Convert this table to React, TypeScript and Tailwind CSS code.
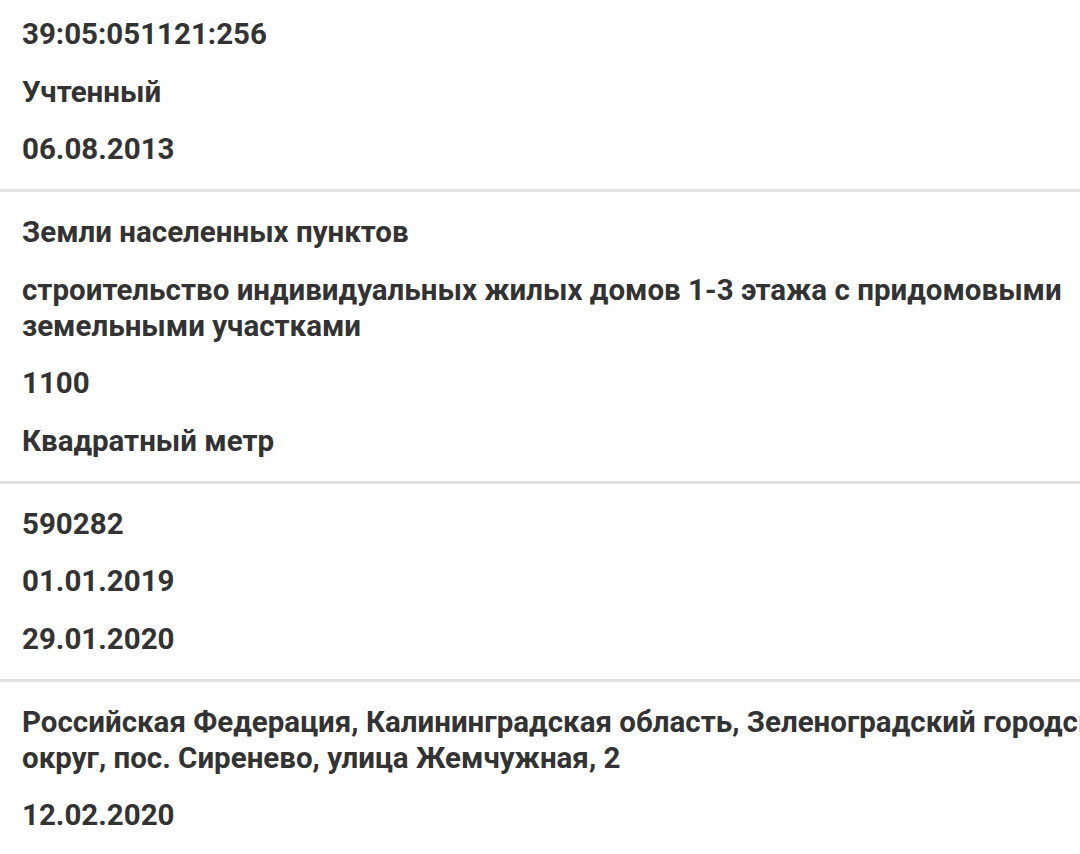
const sections: string[][] = [
  ["39:05:051121:256", "Учтенный", "06.08.2013"],
  [
    "Земли населенных пунктов",
    "строительство индивидуальных жилых домов 1-3 этажа с придомовыми земельными участками",
    "1100",
    "Квадратный метр",
  ],
  ["590282", "01.01.2019", "29.01.2020"],
  [
    "Российская Федерация, Калининградская область, Зеленоградский городской округ, пос. Сиренево, улица Жемчужная, 2",
    "12.02.2020",
  ],
];

export default function App() {
  return (
    <div className="w-full h-[854px] overflow-hidden bg-white">
      <div className="w-[1200px] font-['Roboto',sans-serif] font-bold text-[29.5px] leading-[36px] text-[#333333]">
        {sections.map((items, i) => (
          <div key={i}>
            {i > 0 && <div className="h-[3px] bg-[#e2e2e2]" />}
            <div className={`px-[22px] pb-[22px] flex flex-col gap-[21.5px] ${i === 0 ? "pt-[16px]" : "pt-[22px]"}`}>
              {items.map((t) => (
                <div key={t}>{t}</div>
              ))}
            </div>
          </div>
        ))}
      </div>
    </div>
  );
}
